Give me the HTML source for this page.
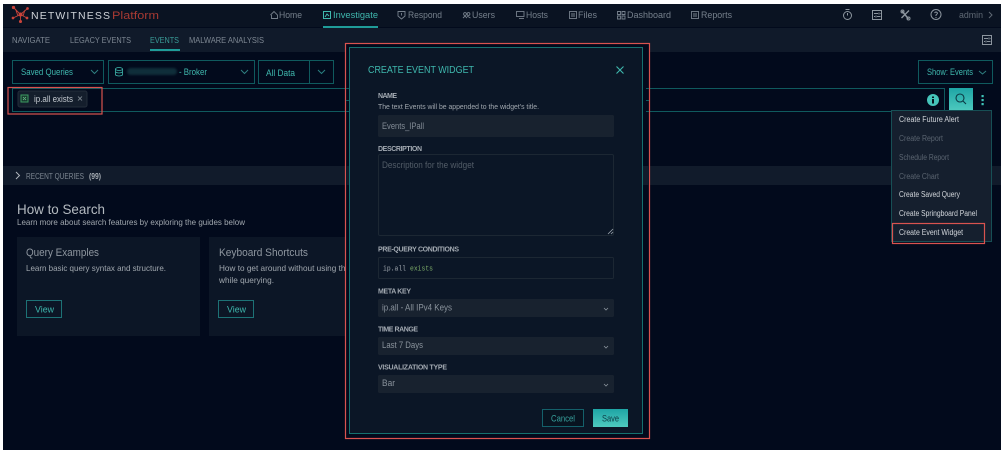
<!DOCTYPE html>
<html><head><meta charset="utf-8"><style>
html,body{margin:0;padding:0;background:#fff;width:1002px;height:452px;overflow:hidden}
svg{display:block;filter:blur(.3px)}
text{font-family:"Liberation Sans",sans-serif;font-size:9px;fill:#9aa3ad}
.n{font-size:9.5px;fill:#76808c}
.s{font-size:8px;fill:#7d8792}
.t{fill:#3fb8ae}
.m{font-size:8px;fill:#d2d6db}
.d{font-size:8px;fill:#5a6470}
.l{font-size:7px;font-weight:bold;fill:#a3aab2}
.i{fill:none;stroke:#76808c;stroke-width:.9}
.ir{fill:none;stroke:#8d969f;stroke-width:1}
.b{fill:none;stroke:#0f5a5e;stroke-width:1}
</style></head><body>
<svg width="1002" height="452" viewBox="0 0 1002 452" xmlns="http://www.w3.org/2000/svg">
<rect x="3" y="4" width="998" height="446" fill="#020a1c"/>
<rect x="3" y="4" width="998" height="23" fill="#0a1322"/>
<rect x="3" y="28" width="998" height="24" fill="#101a2a"/>

<!-- logo -->
<g stroke="#c8433a" stroke-width=".9" fill="#c8433a">
<path d="M13.500 7.500 L20.500 14.500 L27.500 8.500 M13 18 L20.500 14.500 L27 18 M20.500 14.500 L20.500 21.500 M15.500 9 L18 16 M25 10 L23 16" fill="none"/>
<circle cx="13.500" cy="7.500" r="1.200"/><circle cx="27.500" cy="8.500" r=".9"/><circle cx="13" cy="18" r=".9"/><circle cx="27" cy="18" r=".9"/><circle cx="20.500" cy="21.500" r="1.100"/><circle cx="20.500" cy="14.500" r="1.500"/>
</g>
<text x="31" y="19" style="font-size:10.500px;fill:#d0d4d9" textLength="79" lengthAdjust="spacing">NETWITNESS</text>
<text x="112" y="19" style="font-size:11px;fill:#a83a33" textLength="47" lengthAdjust="spacingAndGlyphs">Platform</text>

<!-- top nav -->
<path class="i" d="M270.500 15 L274 11.500 L277.500 15 V18.500 H271.500 V15"/>
<text class="n" x="279" y="18" textLength="23" lengthAdjust="spacingAndGlyphs">Home</text>
<rect x="323.500" y="11.500" width="7" height="7" fill="none" stroke="#3fb8ae"/><path d="M325 17 L327 14 L329 16" fill="none" stroke="#3fb8ae"/>
<text class="n" style="fill:#3fb8ae" x="333" y="18" textLength="45" lengthAdjust="spacingAndGlyphs">Investigate</text>
<rect x="323" y="26" width="55" height="2" fill="#1f9c99"/>
<path class="i" d="M398 11.500 H405 V16 L401.500 19 L398 16 Z M401.500 13 V15.500"/>
<text class="n" x="408" y="18" textLength="34" lengthAdjust="spacingAndGlyphs">Respond</text>
<circle class="i" cx="465" cy="14" r="1.400"/><circle class="i" cx="468.500" cy="14" r="1.400"/><path class="i" d="M463 18 L465 16 L467 18 M467 16 L470.500 18"/>
<text class="n" x="472" y="18" textLength="23" lengthAdjust="spacingAndGlyphs">Users</text>
<rect class="i" x="516.500" y="11.500" width="7.500" height="5"/><path class="i" d="M519 18.500 H524"/>
<text class="n" x="526" y="18" textLength="22" lengthAdjust="spacingAndGlyphs">Hosts</text>
<rect class="i" x="569.500" y="11.500" width="7" height="7"/><path class="i" d="M571 14 H575 M571 16 H575"/>
<text class="n" x="578" y="18" textLength="19" lengthAdjust="spacingAndGlyphs">Files</text>
<path class="i" d="M617.500 11.500 h3 v3 h-3z M622 11.500 h3 v3 h-3z M617.500 16 h3 v3 h-3z M622 16 h3 v3 h-3z"/>
<text class="n" x="627" y="18" textLength="44" lengthAdjust="spacingAndGlyphs">Dashboard</text>
<rect class="i" x="691.500" y="11.500" width="7" height="7"/><path class="i" d="M693 14 H697 M693 16 H697"/>
<text class="n" x="701" y="18" textLength="31" lengthAdjust="spacingAndGlyphs">Reports</text>

<!-- right icons -->
<circle class="ir" cx="847.500" cy="15.500" r="4"/><path class="ir" d="M845.500 9.500 H849.500 M847.500 13 V15.500"/>
<rect class="ir" x="872.500" y="10.500" width="9" height="9"/><path class="ir" d="M874 13.500 H878 M880 13.500 H880.500 M874 16.500 H875 M877 16.500 H880.500 M879 12.500 V14.500 M876 15.500 V17.500"/>
<path d="M902 11 L908.500 19 M909 10.500 L901.500 18" stroke="#8d969f" stroke-width="1.400" fill="none"/><circle cx="902.500" cy="11.500" r="1.500" fill="none" stroke="#8d969f"/><circle cx="908.500" cy="18.500" r="1.500" fill="none" stroke="#8d969f"/>
<circle class="ir" cx="936" cy="14.500" r="5"/><path class="ir" d="M934.500 13 Q936 11 937.500 13 Q937.500 14 936 15 V16 M936 17 V18"/>
<text x="959" y="18" style="font-size:9.500px;fill:#5f6974" textLength="24" lengthAdjust="spacingAndGlyphs">admin</text>
<path d="M989 12 L992 15 L989 18" fill="none" stroke="#5f6974"/>

<!-- sub nav -->
<text class="s" x="12" y="43" textLength="38" lengthAdjust="spacingAndGlyphs">NAVIGATE</text>
<text class="s" x="70" y="43" textLength="61" lengthAdjust="spacingAndGlyphs">LEGACY EVENTS</text>
<text class="s" style="fill:#3a9c98" x="150" y="43" textLength="29" lengthAdjust="spacingAndGlyphs">EVENTS</text>
<rect x="150" y="49" width="30" height="2" fill="#1f9c99"/>
<text class="s" x="189" y="43" textLength="75" lengthAdjust="spacingAndGlyphs">MALWARE ANALYSIS</text>
<rect class="ir" x="982.500" y="35.500" width="9" height="9"/><path class="ir" d="M984 38.500 H988 M990 38.500 H990.500 M984 41.500 H985 M987 41.500 H990.500 M989 37.500 V39.500 M986 40.500 V42.500"/>

<!-- query row -->
<rect class="b" x="12.500" y="60.500" width="91" height="23"/>
<text class="t" x="21" y="75" textLength="52" lengthAdjust="spacingAndGlyphs">Saved Queries</text>
<path d="M91 70 L94.500 73.500 L98 70" fill="none" stroke="#2f7f80"/>
<rect class="b" x="108.500" y="60.500" width="146" height="23"/>
<ellipse cx="119" cy="69" rx="3.500" ry="1.500" fill="none" stroke="#3fb8ae" stroke-width=".8"/><path d="M115.500 69 V75 Q119 77 122.500 75 V69 M115.500 72 Q119 74 122.500 72" fill="none" stroke="#3fb8ae" stroke-width=".8"/>
<rect x="127" y="68" width="50" height="7" rx="3.500" fill="#143a44" opacity=".75" style="filter:blur(1px)"/>
<text class="t" x="179" y="75" textLength="28" lengthAdjust="spacingAndGlyphs">- Broker</text>
<path d="M241 70 L244.500 73.500 L248 70" fill="none" stroke="#2f7f80"/>
<rect class="b" x="258.500" y="60.500" width="75" height="23"/><path class="b" d="M309.500 60.500 V83.500"/>
<text class="t" x="266" y="76" textLength="29" lengthAdjust="spacingAndGlyphs">All Data</text>
<path d="M318 70 L321.500 73.500 L325 70" fill="none" stroke="#2a7f80"/>
<rect class="b" x="918.500" y="60.500" width="74" height="23"/>
<text class="t" x="927" y="75" textLength="46" lengthAdjust="spacingAndGlyphs">Show: Events</text>
<path d="M979 71 L982.500 74 L986 71" fill="none" stroke="#2f7f80"/>

<!-- search bar -->
<rect class="b" x="12.500" y="88.500" width="932" height="23"/>
<rect x="18" y="91" width="69" height="16" rx="2" fill="#141e2c" stroke="#232d3a"/>
<rect x="21" y="95" width="7" height="7" fill="#17392f" stroke="#3d9c62"/><path d="M23 100 L26 97 M23 97 L24 98 M25 99 L26 100" stroke="#6cc58a" stroke-width=".8"/>
<text x="34" y="102" style="fill:#c2c8ce" textLength="39" lengthAdjust="spacingAndGlyphs">ip.all exists</text>
<path d="M78 96.500 L82 100.500 M82 96.500 L78 100.500" stroke="#8a939c" stroke-width=".8" fill="none"/>
<circle cx="933" cy="100" r="6" fill="#45c4ba"/><rect x="932" y="99" width="2" height="4.500" fill="#07141f"/><rect x="932" y="96.500" width="2" height="1.500" fill="#07141f"/>
<defs><linearGradient id="g" x1="0" y1="0" x2="0" y2="1"><stop offset="0" stop-color="#1ea5a5"/><stop offset="1" stop-color="#4ecabf"/></linearGradient></defs>
<rect x="949" y="88" width="24" height="23" fill="url(#g)"/>
<circle cx="960" cy="98" r="4" fill="none" stroke="#0c3a44" stroke-width="1.100"/><path d="M963 101 L966 104" stroke="#0c3a44" stroke-width="1.100"/>
<rect x="981.500" y="95" width="2.200" height="2.200" fill="#3fc4b8"/><rect x="981.500" y="99" width="2.200" height="2.200" fill="#3fc4b8"/><rect x="981.500" y="103" width="2.200" height="2.200" fill="#3fc4b8"/>

<!-- recent queries -->
<rect x="3" y="166" width="998" height="19" fill="#111b2b"/>
<path d="M16 172 L19.500 175.500 L16 179" fill="none" stroke="#b0b6bd"/>
<text class="s" x="26" y="179" textLength="58" lengthAdjust="spacingAndGlyphs">RECENT QUERIES</text>
<text x="89" y="179" style="font-size:8px;font-weight:bold;fill:#a8afb6" textLength="12" lengthAdjust="spacingAndGlyphs">(99)</text>

<!-- how to search -->
<text x="17" y="214" style="font-size:14px;fill:#b4bac0" textLength="88" lengthAdjust="spacingAndGlyphs">How to Search</text>
<text x="17" y="225" style="font-size:8.500px;fill:#a0a7ae" textLength="228" lengthAdjust="spacingAndGlyphs">Learn more about search features by exploring the guides below</text>
<rect x="17" y="237" width="183" height="99" fill="#0c1626"/>
<rect x="209" y="237" width="140" height="99" fill="#0c1626"/>
<text x="26" y="256" style="font-size:11px;fill:#8f97a0" textLength="73" lengthAdjust="spacingAndGlyphs">Query Examples</text>
<text x="26" y="271" style="font-size:8.500px;fill:#a0a7ae" textLength="140" lengthAdjust="spacingAndGlyphs">Learn basic query syntax and structure.</text>
<rect class="b" style="stroke:#1d7276" x="26.500" y="300.500" width="35" height="17"/>
<text class="t" x="35" y="312.500" textLength="19" lengthAdjust="spacingAndGlyphs">View</text>
<text x="219" y="256" style="font-size:11px;fill:#8f97a0" textLength="89" lengthAdjust="spacingAndGlyphs">Keyboard Shortcuts</text>
<text x="219" y="271" style="font-size:8.500px;fill:#a0a7ae" textLength="131" lengthAdjust="spacingAndGlyphs">How to get around without using the</text>
<text x="219" y="283" style="font-size:8.500px;fill:#a0a7ae" textLength="55" lengthAdjust="spacingAndGlyphs">while querying.</text>
<rect class="b" style="stroke:#1d7276" x="218.500" y="300.500" width="35" height="17"/>
<text class="t" x="227" y="312.500" textLength="19" lengthAdjust="spacingAndGlyphs">View</text>

<!-- dropdown -->
<rect x="891.500" y="110.500" width="100" height="131" fill="#151f2e" stroke="#174f55"/>
<text class="m" x="899" y="122" textLength="60" lengthAdjust="spacingAndGlyphs">Create Future Alert</text>
<text class="d" x="899" y="141" textLength="44" lengthAdjust="spacingAndGlyphs">Create Report</text>
<text class="d" x="899" y="160" textLength="50" lengthAdjust="spacingAndGlyphs">Schedule Report</text>
<text class="d" x="899" y="179" textLength="40" lengthAdjust="spacingAndGlyphs">Create Chart</text>
<text class="m" x="899" y="197" textLength="61" lengthAdjust="spacingAndGlyphs">Create Saved Query</text>
<text class="m" x="899" y="216" textLength="78" lengthAdjust="spacingAndGlyphs">Create Springboard Panel</text>
<text class="m" x="899" y="235" textLength="64" lengthAdjust="spacingAndGlyphs">Create Event Widget</text>

<!-- modal -->
<rect x="345.500" y="43.500" width="304" height="395" fill="#020a1c" stroke="#d9534f" stroke-width="1.200"/>
<path d="M346 88.500 H349 M346 111.500 H349 M646 88.500 H649 M646 111.500 H649 M346 100.500 H349 M646 100.500 H649" stroke="#0f5a5e"/>
<rect x="346" y="166" width="3" height="19" fill="#111b2b"/><rect x="643" y="166" width="6" height="19" fill="#111b2b"/>
<rect x="349.500" y="47.500" width="293" height="386" fill="#0b1626" stroke="#14716f"/>
<text x="368" y="73" style="font-size:10.500px;fill:#3fb8ae" textLength="106" lengthAdjust="spacingAndGlyphs">CREATE EVENT WIDGET</text>
<path d="M616.500 66.500 L623.500 73.500 M623.500 66.500 L616.500 73.500" stroke="#3fb8ae" fill="none" stroke-width="1.100"/>

<text class="l" x="378" y="98" textLength="19" lengthAdjust="spacing">NAME</text>
<text x="378" y="109" style="font-size:7.500px;fill:#a0a7ae" textLength="161" lengthAdjust="spacingAndGlyphs">The text Events will be appended to the widget's title.</text>
<rect x="378" y="115" width="236" height="22" rx="1.500" fill="#18222f"/>
<text x="382" y="129" style="fill:#828b95" textLength="42" lengthAdjust="spacingAndGlyphs">Events_IPall</text>

<text class="l" x="378" y="151" textLength="44" lengthAdjust="spacing">DESCRIPTION</text>
<rect x="378.500" y="154.500" width="235" height="81" rx="1.500" fill="#0b1626" stroke="#1c2733"/>
<text x="382" y="168" style="fill:#535d68" textLength="92" lengthAdjust="spacingAndGlyphs">Description for the widget</text>
<path d="M608 234 L613 229 M611 234 L613 232" stroke="#9aa3ad" stroke-width=".8" fill="none"/>

<text class="l" x="378" y="251.500" textLength="81" lengthAdjust="spacing">PRE-QUERY CONDITIONS</text>
<rect x="378.500" y="257.500" width="235" height="21" rx="1" fill="#0b1626" stroke="#1c2733"/>
<text x="383" y="270.500" style="font-family:'Liberation Mono',monospace;font-size:7.500px;fill:#a0a7ae" textLength="23" lengthAdjust="spacingAndGlyphs">ip.all</text>
<text x="410" y="270.500" style="font-family:'Liberation Mono',monospace;font-size:7.500px;fill:#7fae6a" textLength="23" lengthAdjust="spacingAndGlyphs">exists</text>

<text class="l" x="378" y="293.500" textLength="33" lengthAdjust="spacing">META KEY</text>
<rect x="378" y="299" width="236" height="18" rx="1.500" fill="#18222f"/>
<text x="382" y="310.500" style="fill:#8a939c" textLength="70" lengthAdjust="spacingAndGlyphs">ip.all - All IPv4 Keys</text>
<path d="M604 308 L606 310 L608 308" stroke="#8a939c" stroke-width=".8" fill="none"/>

<text class="l" x="378" y="331.500" textLength="40" lengthAdjust="spacing">TIME RANGE</text>
<rect x="378" y="337" width="236" height="18" rx="1.500" fill="#18222f"/>
<text x="382" y="348" style="fill:#8a939c" textLength="41" lengthAdjust="spacingAndGlyphs">Last 7 Days</text>
<path d="M604 346 L606 348 L608 346" stroke="#8a939c" stroke-width=".8" fill="none"/>

<text class="l" x="378" y="369.500" textLength="69" lengthAdjust="spacing">VISUALIZATION TYPE</text>
<rect x="378" y="375" width="236" height="18" rx="1.500" fill="#18222f"/>
<text x="382" y="386" style="fill:#8a939c" textLength="13" lengthAdjust="spacingAndGlyphs">Bar</text>
<path d="M604 384 L606 386 L608 384" stroke="#8a939c" stroke-width=".8" fill="none"/>

<rect x="542.500" y="409.500" width="41" height="17" fill="#081320" stroke="#14606a"/>
<text style="fill:#37a09c" x="551" y="421.500" textLength="24" lengthAdjust="spacingAndGlyphs">Cancel</text>
<rect x="593" y="409" width="35" height="18" fill="url(#g)"/>
<text x="602" y="421.500" style="fill:#0c3a44" textLength="17" lengthAdjust="spacingAndGlyphs">Save</text>

<!-- red highlights -->
<rect x="8" y="87.500" width="94" height="26.500" fill="none" stroke="#d9534f" stroke-width="1.200"/>
<rect x="892.500" y="223.500" width="92" height="20" fill="none" stroke="#d9534f" stroke-width="1.200"/>
</svg>
</body></html>
